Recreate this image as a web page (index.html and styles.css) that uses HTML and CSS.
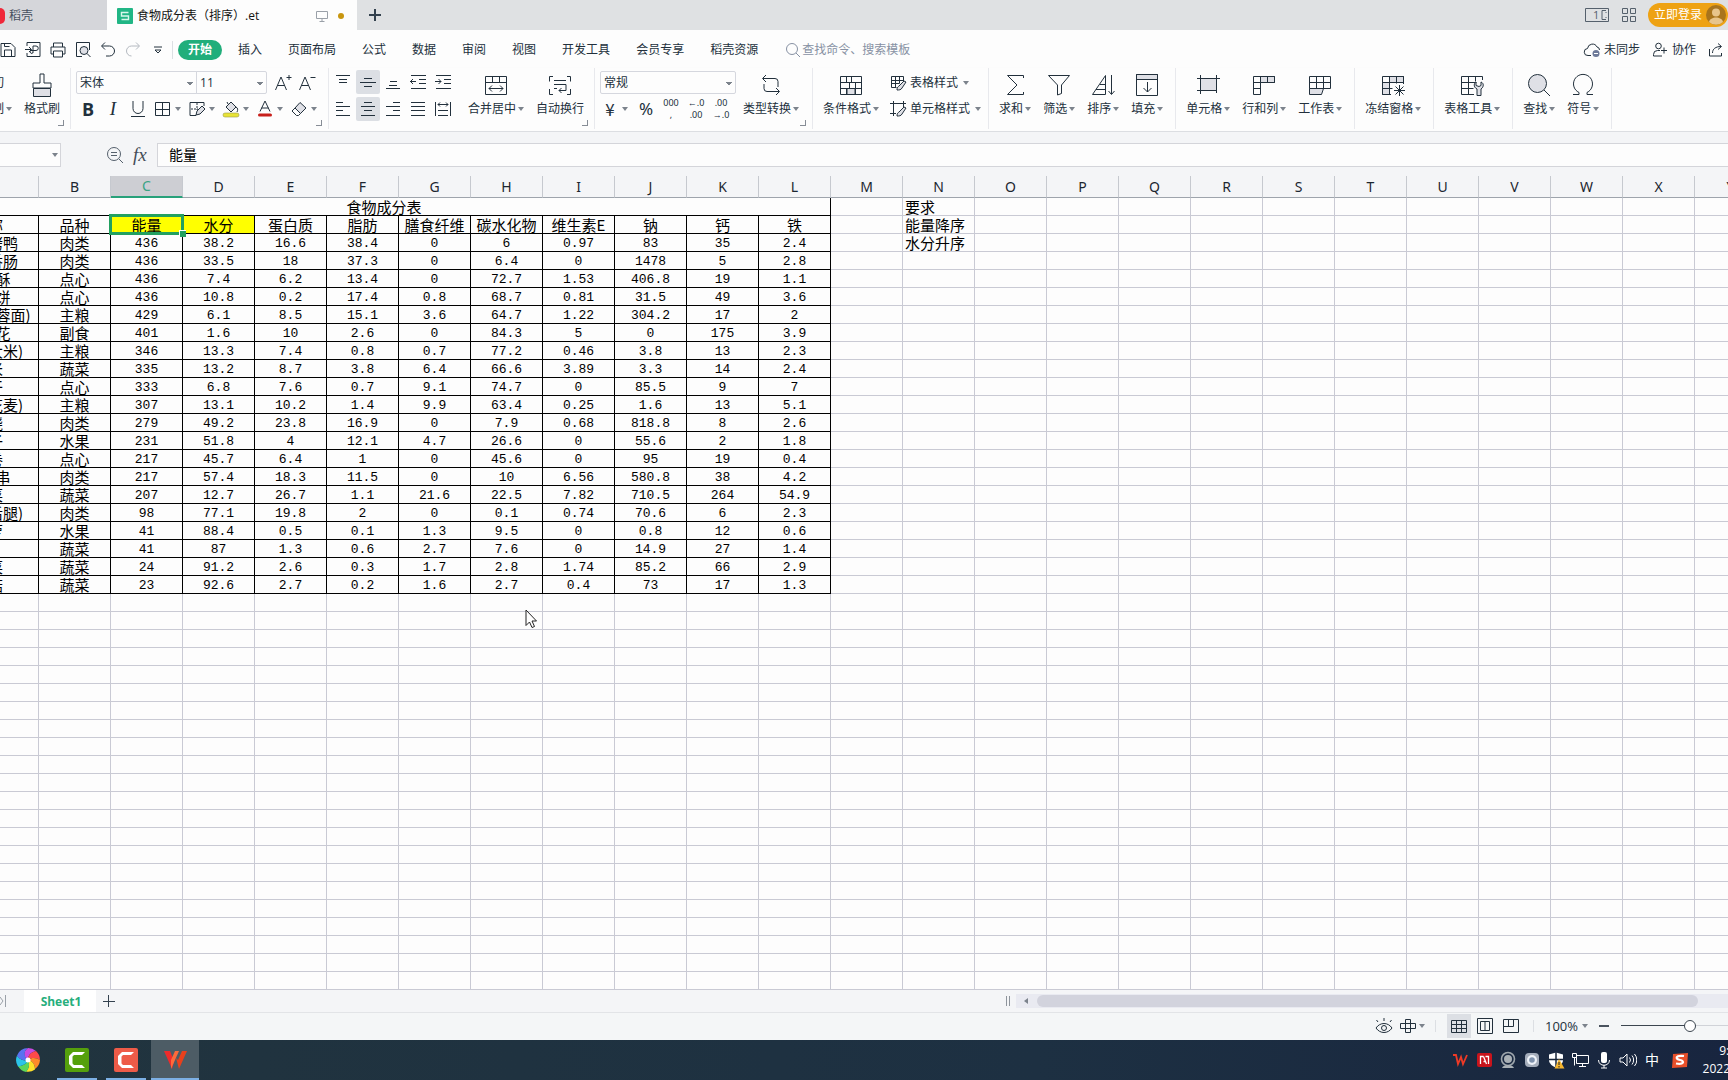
FILE: index.html
```html
<!DOCTYPE html>
<html lang="zh-CN">
<head>
<meta charset="utf-8">
<title>食物成分表（排序）.et</title>
<link rel="stylesheet" href="styles.css">
</head>
<body>
<svg class="defs" aria-hidden="true">
  <symbol id="save" viewBox="0 0 18 18"><path d="M2 2.500h10l4 4v9H2z M5.500 15v-6h7v6 M5.500 2.500v3h5"/></symbol>
  <symbol id="pdf" viewBox="0 0 18 18"><path d="M3 5V1.500h13v14H3V12 M1 8.500h6 M5 6l2.500 2.500L5 11 M9 12V5h3a2 2 0 0 1 0 4.500H7a1.500 1.500 0 1 0 2 2"/></symbol>
  <symbol id="print" viewBox="0 0 18 18"><path d="M4.500 6V2h9v4 M4.500 13H2V6h14v7h-2.500 M4.500 10h9v6h-9z"/></symbol>
  <symbol id="preview" viewBox="0 0 18 18"><path d="M8 15.500H2.500v-14h13V9"/><circle class="soft" cx="10" cy="9.500" r="4"/><path d="M13 12.500l3.500 3.500"/></symbol>
  <symbol id="undo" viewBox="0 0 18 18"><path d="M6 1.500L2.500 5 6 8.500 M3 5h7.500a5 5 0 0 1 0 10H7"/></symbol>
  <symbol id="redo" viewBox="0 0 18 18"><path d="M12 1.500L15.500 5 12 8.500 M15 5H7.500a5 5 0 0 0 0 10"/></symbol>
  <symbol id="more" viewBox="0 0 10 10"><path d="M1 2h8 M2 5l3 3 3-3z"/></symbol>
  <symbol id="lens" viewBox="0 0 18 18"><circle cx="8" cy="8" r="5.500"/><path d="M12 12l4 4"/></symbol>
  <symbol id="cloud" viewBox="0 0 18 18"><path d="M8 14.500H5a3.500 3.500 0 0 1-.5-7A5 5 0 0 1 14 6a3 3 0 0 1 2.500 3"/><circle cx="13" cy="12.500" r="3.500" fill="#6e7a99" stroke="none"/><path d="M11 12.500h4" stroke="#fff"/></symbol>
  <symbol id="person" viewBox="0 0 18 18"><circle cx="7.500" cy="5" r="2.800"/><path d="M11 15H2.500v-1.500a4 4 0 0 1 4-4h2.500 M13 6.500v6 M10 9.500h6"/></symbol>
  <symbol id="share" viewBox="0 0 18 18"><path d="M2.500 8v7h12v-3 M5.500 12c0-4 3-6.500 8.500-6.500 M11 2.500l3.500 3-3.500 3"/></symbol>
  <symbol id="brush" viewBox="0 0 24 24"><path d="M10 8V1h4v9h7v5H3v-5h7V8"/><path class="soft" d="M3.500 15.500h17v8h-17z"/></symbol>
  <symbol id="aplus" viewBox="0 0 18 18"><path d="M1.500 16L7 3l5.500 13 M3.500 11.500h7 M15 1v5 M12.500 3.500h5"/></symbol>
  <symbol id="aminus" viewBox="0 0 18 18"><path d="M1.500 16L7 3l5.500 13 M3.500 11.500h7 M12.500 3.500h5"/></symbol>
  <symbol id="ul" viewBox="0 0 18 18"><path d="M4 1v7.500a4.500 4.500 0 0 0 10 0V1 M2 16.500h14"/></symbol>
  <symbol id="borders" viewBox="0 0 18 18"><path d="M1.500 2.500h14v13h-14z M8.500 2.500v13 M1.500 9.500h14"/></symbol>
  <symbol id="drawborder" viewBox="0 0 18 18"><path d="M16 6V2.500H2v13h6"/><path stroke-dasharray="2 1" d="M9 3v7 M3 9h7"/><path class="soft" d="M8 15l1-4 5-5 3 3-5 5z"/></symbol>
  <symbol id="fill" viewBox="0 0 18 18"><path class="soft" d="M4 7l5-5 5 5-5 5z"/><path d="M6 4L5 2 M14 7c2 1 2 3 1 5"/><rect x="1" y="13" width="16" height="4" rx="2" fill="#e8e337" stroke="#9a9a4a" stroke-width=".6"/></symbol>
  <symbol id="fontcolor" viewBox="0 0 18 18"><path d="M4 11.500L9 1l5 10.500 M5.500 8h7"/><rect x="2" y="13.500" width="14" height="3" rx="1.500" fill="#c8201c" stroke="none"/></symbol>
  <symbol id="eraser" viewBox="0 0 18 18"><path class="soft" d="M5 8l5-5.500 6 5.500-5.500 5.500z"/><path d="M5 8l-3 3 4.500 4.500h2l2-2"/></symbol>
  <symbol id="vtop" viewBox="0 0 18 18"><path d="M2 2.500h14 M5 6.500h8 M5 9.500h8"/></symbol>
  <symbol id="vmid" viewBox="0 0 18 18"><path d="M5 5.500h8 M1 9.500h16 M5 13.500h8"/></symbol>
  <symbol id="vbot" viewBox="0 0 18 18"><path d="M6 8.500h7 M5 12.500h8 M2 15.500h14"/></symbol>
  <symbol id="outdent" viewBox="0 0 18 18"><path d="M2 2.500h15 M10 6.500h7 M10 10.500h7 M2 15.500h15 M1 8.500h6 M4 6L1.500 8.500 4 11"/></symbol>
  <symbol id="indent" viewBox="0 0 18 18"><path d="M2 2.500h15 M10 6.500h7 M10 10.500h7 M2 15.500h15 M1 8.500h6 M4.500 6L7 8.500 4.500 11"/></symbol>
  <symbol id="left" viewBox="0 0 18 18"><path d="M2 2.500h7 M2 6.500h14 M2 10.500h7 M2 15.500h14"/></symbol>
  <symbol id="center" viewBox="0 0 18 18"><path d="M5 2.500h8 M2 6.500h14 M5 10.500h8 M2 15.500h14"/></symbol>
  <symbol id="right" viewBox="0 0 18 18"><path d="M9 2.500h7 M2 6.500h14 M9 10.500h7 M2 15.500h14"/></symbol>
  <symbol id="justify" viewBox="0 0 18 18"><path d="M2 2.500h14 M2 6.500h14 M2 10.500h14 M2 15.500h14"/></symbol>
  <symbol id="spread" viewBox="0 0 18 18"><path d="M1.500 2v14 M16.500 2v14 M4 4.500h10 M6 2.500l-2 2 2 2 M12 2.500l2 2-2 2 M4 10.500h10 M4 15.500h10"/></symbol>
  <symbol id="merge" viewBox="0 0 24 24"><path d="M1.500 3.500h21v18h-21z M1.500 9.500h21 M8.500 3.500v6 M15.500 3.500v6 M5 15.500h14 M8 12.500l-3 3 3 3 M16 12.500l3 3-3 3"/></symbol>
  <symbol id="wrap" viewBox="0 0 24 24"><path d="M5 3.500H1.500v5 M19 3.500h3.500v5 M1.500 16v5.500H5 M22.500 16v5.500H19 M6 7.500h12 M6 11.500h12 M6 15.500h3 M18 11.500v6h-7 M13.500 15L11 17.500l2.500 2.500"/></symbol>
  <symbol id="convert" viewBox="0 0 24 24"><path d="M7 2L3.500 5.500 7 9 M4 5.500h12a3 3 0 0 1 3 3V14 M17 15l3.500 3.500L17 22 M20 18.500H8a3 3 0 0 1-3-3V11"/></symbol>
  <symbol id="cond" viewBox="0 0 24 24"><path class="soft" d="M8 15.500h8v6H8z"/><path d="M1.500 3.500h21v18h-21z M1.500 9.500h21 M1.500 15.500h21 M7.500 3.500v6 M7.500 15.500v6 M12.500 3.500v6 M10.500 9.500v6 M16.500 9.500v12"/></symbol>
  <symbol id="tstyle" viewBox="0 0 18 18"><path d="M14.500 7V2.500h-12v11h5 M2.500 6.500h12 M2.500 9.500h8 M6.500 2.500v11 M10.500 2.500v7"/><path class="soft" d="M8 16c0-3 1-3 2-4l5-5 2 1-4 6c-1 2-3 2-5 2z"/></symbol>
  <symbol id="cstyle" viewBox="0 0 18 18"><path d="M4.500 1v15 M1 3.500h16 M14.500 1v6 M1 13.500h6"/><path class="soft" d="M8 16c0-3 1-3 2-4l5-5 2 1-4 6c-1 2-3 2-5 2z"/></symbol>
  <symbol id="sum" viewBox="0 0 24 24"><path d="M20.500 5V2.500h-16L14 12l-9.500 9.500h16V19"/></symbol>
  <symbol id="filter" viewBox="0 0 24 24"><path d="M1.500 2.500h21L14.500 12v8.500l-4 1.500V12z"/></symbol>
  <symbol id="sort" viewBox="0 0 24 24"><path d="M1.500 21.500L14.500 2.500v19z M9 11.500h5.500 M5 16.500h9.500 M20.500 2v19 M17.500 18l3 3.500 3-3.500"/></symbol>
  <symbol id="fillin" viewBox="0 0 24 24"><path class="soft" d="M1.500 1.500h21v5h-21z"/><path d="M1.500 1.500h21v21h-21z M12.500 9v10 M8.500 15l4 4 4-4"/></symbol>
  <symbol id="cells" viewBox="0 0 24 24"><path class="soft" d="M4.500 5.500h16v12h-16z"/><path d="M4.500 2v19 M1 5.500h23 M20.500 2v13 M1 17.500h18 M20.500 17v3"/></symbol>
  <symbol id="rowcol" viewBox="0 0 24 24"><path class="soft" d="M8.500 3.500h14v6h-14z"/><path d="M1.500 3.500h21v6h-14v12h-7z M1.500 9.500h7 M1.500 15.500h7 M8.500 3.500v6 M15.500 3.500v6"/></symbol>
  <symbol id="sheet" viewBox="0 0 24 24"><path class="soft" d="M1.500 15.500h14l-2 6h-12z"/><path d="M1.500 3.500h21v12h-21z M1.500 9.500h21 M8.500 3.500v12 M15.500 3.500v12"/></symbol>
  <symbol id="freeze" viewBox="0 0 24 24"><path class="soft" d="M1.500 9.500h7v12h-7z M8.500 3.500h14v6h-14z"/><path d="M22.500 11V3.500h-21v18H10 M1.500 9.500h21 M1.500 15.500h10 M8.500 3.500v18 M15.500 3.500v7 M18.500 12v11 M13 17.500h11 M14.500 13.500l8 8 M22.500 13.500l-8 8"/></symbol>
  <symbol id="tools" viewBox="0 0 24 24"><path d="M22.500 7V3.500h-21v18H14 M1.500 9.500h15 M1.500 15.500h12 M8.500 3.500v18 M15.500 3.500v5"/><path class="soft" d="M17 22.500V16c-4-2-3-6-1-7v3.500l3 1 2-1V9c3 1 3 5 0 7v6.500z"/></symbol>
  <symbol id="find" viewBox="0 0 24 24"><circle class="soft" cx="10.500" cy="10.500" r="9"/><path d="M17 17l6 6"/></symbol>
  <symbol id="omega" viewBox="0 0 24 24"><path d="M2 21.500h6v-2A9.500 9.500 0 1 1 16 19.500v2h6"/></symbol>
  <symbol id="zoomout" viewBox="0 0 18 18"><circle cx="8" cy="8" r="6.500"/><path d="M5 6.500h6 M5 9.500h6 M13 13l4 4"/></symbol>
  <symbol id="comp" viewBox="0 0 26 18"><path d="M1.500 2.500h23v13h-23z M22 4.500h-4v9h4 M22 6v1 M22 11v1"/></symbol>
  <symbol id="grid4" viewBox="0 0 18 18"><path d="M2.500 2.500h5v5h-5z M10.500 2.500h5v5h-5z M2.500 10.500h5v5h-5z M10.500 10.500h5v5h-5z"/></symbol>
  <symbol id="monitor" viewBox="0 0 12 12"><path d="M.5 1.500h11v7H.5z M6 8.500v3 M3.500 11.500h5"/></symbol>
  <symbol id="eye" viewBox="0 0 18 18"><path d="M1 11c4-6 12-6 16 0-4 6-12 6-16 0z M3 5L1.500 3 M9 4V1 M15 5l1.500-2"/><circle cx="9" cy="11" r="2.500"/></symbol>
  <symbol id="cross" viewBox="0 0 18 18"><path d="M6.500 2.500h5v13h-5z M1.500 6.500h15v5h-15z"/></symbol>
  <symbol id="normal" viewBox="0 0 18 18"><path d="M1.500 3.500h15v12h-15z M1.500 7.500h15 M1.500 11.500h15 M6.500 3.500v12 M11.500 3.500v12"/></symbol>
  <symbol id="page" viewBox="0 0 18 18"><path d="M1.500 1.500h15v15h-15z M4.500 4.500h9v9h-9z M9 4.500v9"/></symbol>
  <symbol id="breaks" viewBox="0 0 18 18"><path d="M1.500 2.500h15v13h-15z M6.500 2.500v7 M1.500 9.500h10 M11.500 2.500v7"/></symbol>
  <symbol id="camtasia" viewBox="0 0 24 24"><path fill="#fff" stroke="none" d="M4 8l4-4h12l-3 3H9L7.500 8.500v7L9 17h8l3 3H8l-4-4z"/></symbol>
</svg>

<div class="app">
  <header class="titlebar">
    <button class="doc-tab home"><span class="shell"></span>稻壳</button>
    <button class="doc-tab current">
      <svg class="doc-logo" viewBox="0 0 16 16"><rect width="16" height="16" rx="1" fill="#21b685"/><path d="M11.500 4.500h-7v3.500h7v3.500h-7" fill="none" stroke="#d8f7ea" stroke-width="1.400"/></svg>
      <span>食物成分表（排序）.et</span>
      <svg class="ic mon"><use href="#monitor"/></svg><i class="unsaved"></i>
    </button>
    <button class="new-tab" aria-label="新建"></button>
    <div class="title-right">
      <button class="comp" aria-label="对照"><svg class="ic"><use href="#comp"/></svg><span>1</span></button>
      <button aria-label="应用"><svg class="ic"><use href="#grid4"/></svg></button>
      <button class="login">立即登录<svg viewBox="0 0 20 20"><circle cx="10" cy="10" r="10" fill="#a8741c"/><circle cx="10" cy="7.500" r="4" fill="#e8c58b"/><path d="M3 17c1-6 13-6 14 0a10 10 0 0 1-14 0z" fill="#e8c58b"/></svg></button>
    </div>
  </header>

  <nav class="menubar">
    <div class="quick">
      <button aria-label="保存"><svg class="ic"><use href="#save"/></svg></button>
      <button aria-label="输出为PDF"><svg class="ic"><use href="#pdf"/></svg></button>
      <button aria-label="打印"><svg class="ic"><use href="#print"/></svg></button>
      <button aria-label="打印预览"><svg class="ic"><use href="#preview"/></svg></button>
      <button aria-label="撤销"><svg class="ic"><use href="#undo"/></svg></button>
      <button class="off" aria-label="恢复"><svg class="ic"><use href="#redo"/></svg></button>
      <button aria-label="更多"><svg class="ic tiny"><use href="#more"/></svg></button>
    </div>
    <button class="pill">开始</button>
    <div class="menus">
      <button>插入</button><button>页面布局</button><button>公式</button><button>数据</button><button>审阅</button><button>视图</button><button>开发工具</button><button>会员专享</button><button>稻壳资源</button>
      <label class="search"><svg class="ic"><use href="#lens"/></svg><input type="text" placeholder="查找命令、搜索模板" aria-label="查找命令"></label>
    </div>
    <div class="menu-right">
      <button><svg class="ic"><use href="#cloud"/></svg>未同步</button>
      <button><svg class="ic"><use href="#person"/></svg>协作</button>
      <button><svg class="ic"><use href="#share"/></svg>分享</button>
    </div>
  </nav>

  <section class="ribbon">
    <div class="group clip launch">
      <div class="stack cut"><button>剪切</button><button class="dd">复制</button></div>
      <button class="big"><svg class="ic"><use href="#brush"/></svg><span>格式刷</span></button>
    </div>
    <div class="group font launch">
      <div class="lines">
        <div class="line">
          <select class="face" aria-label="字体"><option>宋体</option></select><select class="size" aria-label="字号"><option>11</option></select>
          <button class="tool grow" aria-label="增大字号"><svg class="ic"><use href="#aplus"/></svg></button>
          <button class="tool" aria-label="减小字号"><svg class="ic"><use href="#aminus"/></svg></button>
        </div>
        <div class="line pad">
          <button class="tool bold">B</button><button class="tool ital">I</button>
          <button class="tool" aria-label="下划线"><svg class="ic"><use href="#ul"/></svg></button>
          <button class="tool dd" aria-label="边框"><svg class="ic"><use href="#borders"/></svg></button>
          <button class="tool dd" aria-label="绘图边框"><svg class="ic"><use href="#drawborder"/></svg></button>
          <button class="tool dd" aria-label="填充颜色"><svg class="ic"><use href="#fill"/></svg></button>
          <button class="tool dd" aria-label="字体颜色"><svg class="ic"><use href="#fontcolor"/></svg></button>
          <button class="tool dd" aria-label="清除"><svg class="ic"><use href="#eraser"/></svg></button>
        </div>
      </div>
    </div>
    <div class="group align launch">
      <div class="aligns">
        <button class="tool" aria-label="顶端对齐"><svg class="ic"><use href="#vtop"/></svg></button>
        <button class="tool on" aria-label="垂直居中"><svg class="ic"><use href="#vmid"/></svg></button>
        <button class="tool" aria-label="底端对齐"><svg class="ic"><use href="#vbot"/></svg></button>
        <button class="tool" aria-label="减少缩进"><svg class="ic"><use href="#outdent"/></svg></button>
        <button class="tool" aria-label="增加缩进"><svg class="ic"><use href="#indent"/></svg></button>
        <button class="tool" aria-label="左对齐"><svg class="ic"><use href="#left"/></svg></button>
        <button class="tool on" aria-label="水平居中"><svg class="ic"><use href="#center"/></svg></button>
        <button class="tool" aria-label="右对齐"><svg class="ic"><use href="#right"/></svg></button>
        <button class="tool" aria-label="两端对齐"><svg class="ic"><use href="#justify"/></svg></button>
        <button class="tool" aria-label="分散对齐"><svg class="ic"><use href="#spread"/></svg></button>
      </div>
      <button class="big"><svg class="ic"><use href="#merge"/></svg><span class="dd">合并居中</span></button>
      <button class="big"><svg class="ic"><use href="#wrap"/></svg><span>自动换行</span></button>
    </div>
    <div class="group number launch">
      <div class="lines">
        <div class="line"><select class="format" aria-label="数字格式"><option>常规</option></select></div>
        <div class="line nums">
          <button class="tool dd yen">¥</button><button class="tool pct">%</button>
          <button class="tool mini"><span>000</span><span>,</span></button>
          <button class="tool mini"><span>←.0</span><span>.00</span></button>
          <button class="tool mini"><span>.00</span><span>→.0</span></button>
        </div>
      </div>
      <button class="big"><svg class="ic"><use href="#convert"/></svg><span class="dd">类型转换</span></button>
    </div>
    <div class="group styles">
      <button class="big"><svg class="ic"><use href="#cond"/></svg><span class="dd">条件格式</span></button>
      <div class="stack">
        <button class="dd"><svg class="ic"><use href="#tstyle"/></svg>表格样式</button>
        <button class="dd"><svg class="ic"><use href="#cstyle"/></svg>单元格样式</button>
      </div>
    </div>
    <div class="group">
      <button class="big"><svg class="ic"><use href="#sum"/></svg><span class="dd">求和</span></button>
      <button class="big"><svg class="ic"><use href="#filter"/></svg><span class="dd">筛选</span></button>
      <button class="big"><svg class="ic"><use href="#sort"/></svg><span class="dd">排序</span></button>
      <button class="big"><svg class="ic"><use href="#fillin"/></svg><span class="dd">填充</span></button>
    </div>
    <div class="group">
      <button class="big"><svg class="ic"><use href="#cells"/></svg><span class="dd">单元格</span></button>
      <button class="big"><svg class="ic"><use href="#rowcol"/></svg><span class="dd">行和列</span></button>
      <button class="big"><svg class="ic"><use href="#sheet"/></svg><span class="dd">工作表</span></button>
    </div>
    <div class="group"><button class="big"><svg class="ic"><use href="#freeze"/></svg><span class="dd">冻结窗格</span></button></div>
    <div class="group"><button class="big"><svg class="ic"><use href="#tools"/></svg><span class="dd">表格工具</span></button></div>
    <div class="group">
      <button class="big"><svg class="ic"><use href="#find"/></svg><span class="dd">查找</span></button>
      <button class="big"><svg class="ic"><use href="#omega"/></svg><span class="dd">符号</span></button>
    </div>
  </section>

  <section class="formula">
    <button class="namebox dd" aria-label="名称框"></button>
    <button class="zoomfx" aria-label="浏览公式"><svg class="ic"><use href="#zoomout"/></svg></button>
    <span class="fx">fx</span>
    <input class="fxinput" type="text" value="能量" aria-label="编辑栏">
  </section>

  <main class="sheet">
    <table class="grid"><colgroup id="cols"></colgroup><thead><tr id="heads"></tr></thead><tbody id="rows"></tbody></table>
    <svg class="cursor" viewBox="0 0 12 20"><path d="M1 1v15.500l3.500-3.500 2.500 5.500 2.500-1L7 12h4.500z" fill="#fff" stroke="#222"/></svg>
  </main>

  <footer class="tabs">
    <svg class="ic last" viewBox="0 0 8 12"><path d="M0 2l3 4-3 4 M5.500 0v12"/></svg>
    <button class="sheet-tab">Sheet1</button>
    <button class="add" aria-label="新建工作表"></button>
    <i class="split"></i>
    <div class="hscroll"><i class="thumb"></i></div>
  </footer>

  <div class="status">
    <button aria-label="护眼模式"><svg class="ic"><use href="#eye"/></svg></button>
    <button class="dd" aria-label="阅读模式"><svg class="ic"><use href="#cross"/></svg></button>
    <i class="bar"></i>
    <button class="view on" aria-label="普通视图"><svg class="ic"><use href="#normal"/></svg></button>
    <button class="view" aria-label="页面视图"><svg class="ic"><use href="#page"/></svg></button>
    <button class="view" aria-label="分页预览"><svg class="ic"><use href="#breaks"/></svg></button>
    <i class="bar"></i>
    <button class="dd pctzoom">100%</button>
    <button class="minus" aria-label="缩小"></button>
    <input class="zoom" type="range" min="0" max="100" value="46" aria-label="缩放">
  </div>

  <div class="taskbar">
    <button class="task wheel" aria-label="浏览器"><svg viewBox="0 0 24 24"><path d="M12 12C7 9 7 3 12 0a12 12 0 0 1 8 3c-5 1-8 4-8 9z" fill="#c84ae0"/><path d="M12 12c0-5 3-8 8-9a12 12 0 0 1 4 9c-3-2-8-3-12 0z" fill="#ff4a4a"/><path d="M12 12c4-3 9-2 12 0a12 12 0 0 1-5 9c0-4-2-8-7-9z" fill="#ff8a2a"/><path d="M12 12c5 1 7 5 7 9.500a12 12 0 0 1-9 2c3-3 4-7 2-11.500z" fill="#ffe02a"/><path d="M12 12c2 4 1 9-2 12a12 12 0 0 1-8-6c4 0 9-2 10-6z" fill="#5cd65a"/><path d="M12 12c-1 4-6 6-10 6.500a12 12 0 0 1-1-11c2 3 6 6 11 4.500z" fill="#2cc4e8"/><path d="M12 12C7 13 3 11 1 7.500A12 12 0 0 1 12 0c-5 3-4 9 0 12z" fill="#5a72f0"/><circle cx="12" cy="12" r="2.500" fill="#fff"/></svg></button>
    <button class="task green" aria-label="Camtasia"><svg><use href="#camtasia"/></svg></button>
    <button class="task red" aria-label="Recorder"><svg><use href="#camtasia"/></svg></button>
    <button class="task active" aria-label="WPS"><svg viewBox="0 0 24 24"><path d="M1 3h6l4 10-2 8z" fill="#ef2b2b"/><path d="M8 21L16 3h-4l-4 9z" fill="#ff6a3a"/><path d="M13 10l3 11 8-18h-5l-4 9z" fill="#e8401c"/></svg></button>
    <div class="tray">
      <svg viewBox="0 0 18 18"><path d="M2 4h3l2 9 3-7 2 7 4-9" fill="none" stroke="#ee3a26" stroke-width="1.800"/></svg>
      <svg viewBox="0 0 18 18"><rect x="2" y="2" width="15" height="14" rx="2" fill="#c8141c"/><path d="M5.500 13V5.500l3 0 M13.500 13V5.500h-3 M8.500 5.500l3 7.500 M8.500 10.500h2" fill="none" stroke="#fff" stroke-width="1.300"/></svg>
      <svg viewBox="0 0 18 18"><circle cx="9" cy="8" r="6.500" fill="none" stroke="#9ea6ac" stroke-width="1.600"/><circle cx="9" cy="8" r="4" fill="#a9b0b5"/><path d="M3 17c1-4 11-4 12 0z" fill="#a9b0b5"/></svg>
      <svg viewBox="0 0 18 18"><rect x="2" y="2" width="14" height="14" rx="4" fill="#a4adbb"/><circle cx="9" cy="9" r="5" fill="#eef2f8"/><circle cx="9" cy="9" r="2.800" fill="#7f92ad"/></svg>
      <svg viewBox="0 0 18 18"><path d="M9 1.500l7 2V9c0 4-4 6.500-7 7.500C6 15.500 2 13 2 9V3.500z" fill="#fff"/><path d="M9 1v15 M2 8.500h14" stroke="#18263a" stroke-width="1.500"/><path d="M12 8l5.500 9.500h-10z" fill="#f5b52e"/><path d="M12 11v3 M12 15v1.500" stroke="#222"/></svg>
      <svg viewBox="0 0 18 18" class="line-ic"><path d="M5.500 4.500h12v8h-12z M11.500 12.500v3 M8 15.500h7 M1.500 2.500h4v4h-4z M3.500 6.500v8"/></svg>
      <svg viewBox="0 0 18 18"><rect x="6" y="1" width="6" height="11" rx="2" fill="#fff"/><path d="M3.500 9c0 7 11 7 11 0 M9 14v3 M6 17h6" fill="none" stroke="#fff"/></svg>
      <svg viewBox="0 0 18 18" class="line-ic"><path d="M1 7h3l4-4v12l-4-4H1z M10.500 6.500a4 4 0 0 1 0 5 M13 4.500a7 7 0 0 1 0 9 M15.500 3a9 9 0 0 1 0 12"/></svg>
      <span class="ime">中</span>
      <svg viewBox="0 0 18 18"><path d="M2 3l15-1-1 14-15 1z" fill="#e9502a"/><path d="M13 5c-9-1-9 3-4 4s4 5-4 3.500" fill="none" stroke="#fff" stroke-width="2.200"/></svg>
      <div class="clock"><span>9:24</span><span>2022/4/12</span></div>
    </div>
  </div>
</div>
<script src="sheet.js"></script>
</body>
</html>
```
FILE: styles.css
```css
* { box-sizing: border-box; }
body {
  margin: 0;
  overflow: hidden;
  font: 12px/16px "Open Sans", "Noto Sans CJK SC", sans-serif;
  color: #22303c;
}
button, input, select { font: inherit; color: inherit; margin: 0; padding: 0; border: 0; background: none; }
button { display: inline-flex; align-items: center; white-space: nowrap; flex: none; }
select { appearance: none; }
i { display: block; flex: none; }
svg { flex: none; display: block; }
.defs { position: absolute; width: 0; height: 0; }
.ic { width: 18px; height: 18px; fill: none; stroke: currentColor; stroke-width: 1; }
.ic.tiny { width: 10px; height: 10px; }
.soft { fill: #dfe0e6; }
.app { height: 100vh; display: flex; flex-direction: column; overflow: hidden; background: #fdfdfd; }

/* drop-down arrow after a control */
.dd::after {
  content: "";
  flex: none;
  margin-left: 2px;
  border: 3px solid transparent;
  border-top: 4px solid #7c838c;
  border-bottom: 0;
}

/* title bar */
.titlebar { display: flex; height: 30px; flex: none; background: #dfe1e3; }
.doc-tab { padding-top: 1px; }
.doc-tab.home { width: 107px; background: #d5d6da; color: #465060; gap: 4px; }
.shell { width: 5px; height: 16px; border-radius: 0 8px 8px 0; background: #f0283a; }
.doc-tab.current { width: 250px; padding: 1px 13px 0 10px; background: #fdfdfd; color: #111; gap: 4px; }
.doc-logo { width: 16px; height: 16px; }
.mon { width: 12px; height: 12px; margin-left: auto; color: #9aa0a8; }
.unsaved { width: 6px; height: 6px; border-radius: 3px; background: #c8960f; margin-left: 6px; }
.new-tab { width: 36px; justify-content: center; }
.new-tab::after, .add::after {
  content: "";
  width: 12px;
  height: 12px;
  background: linear-gradient(#34424f, #34424f) center / 12px 2px no-repeat, linear-gradient(#34424f, #34424f) center / 2px 12px no-repeat;
}
.title-right { display: flex; margin-left: auto; align-items: center; gap: 10px; color: #55606c; }
.comp .ic { width: 26px; }
.comp { position: relative; }
.comp span { position: absolute; left: 9px; font-size: 11px; }
.login { height: 24px; padding: 0 2px 0 6px; gap: 4px; border-radius: 12px; background: #eea213; color: #fff; }
.login svg { width: 20px; height: 20px; }

/* menu bar */
.menubar { display: flex; height: 38px; flex: none; align-items: center; padding-top: 1px; }
.quick { display: flex; align-items: center; gap: 7px; margin-left: -1px; padding-right: 7px; border-right: 1px solid #dcdfe3; }
.quick .tiny { margin: 0 2px 0 4px; }
.off { color: #b4b9c0; }
.pill { height: 20px; margin-left: 5px; padding: 0 10px; border-radius: 10px; background: #21ae7b; color: #fff; font-weight: 700; }
.menus { display: flex; gap: 26px; margin-left: 16px; align-items: center; }
.search { display: flex; align-items: center; color: #8791a3; }
.search input { width: 140px; }
.search input::placeholder { color: #8791a3; opacity: 1; }
.menu-right { display: flex; gap: 11px; margin-left: auto; margin-right: -24px; }
.menu-right button { gap: 3px; }

/* ribbon */
.ribbon { display: flex; height: 64px; flex: none; border-bottom: 1px solid #dcdee2; box-shadow: 0 1px 2px #e6e7ea; padding-bottom: 2px; }
.group { display: flex; position: relative; gap: 12px; flex: none; padding: 0 12px 0 10px; border-right: 1px solid #e8e9ed; }
.group.launch::after {
  content: "";
  position: absolute;
  right: 6px;
  bottom: 3px;
  width: 5px;
  height: 5px;
  border: solid #878d96;
  border-width: 0 1px 1px 0;
}
.big { flex-direction: column; gap: 4px; padding-top: 5px; align-self: flex-start; }
.big .ic { width: 24px; height: 24px; }
.big span { display: flex; align-items: center; }
.stack { display: flex; flex-direction: column; gap: 2px; padding-top: 3px; }
.stack button { height: 24px; gap: 3px; }
.clip { padding: 0 10px 0 0; gap: 12px; }
.cut { margin-left: -20px; }
.cut .dd { gap: 0; }
.lines { display: flex; flex-direction: column; gap: 3px; padding-top: 3px; }
.line { display: flex; height: 23px; align-items: center; }
.font { padding: 0 8px 0 5px; }
.face { width: 121px; border-radius: 2px 0 0 2px; }
.size { width: 71px; margin-left: -1px; border-radius: 0 2px 2px 0; }
.format { width: 136px; border-radius: 2px; }
.ribbon select {
  height: 23px;
  padding: 0 3px;
  border: 1px solid #d5d7de;
  background: conic-gradient(from -45deg at 50% 100%, #7c838c 90deg, transparent 0) right 3px center / 7px 4px no-repeat;
  background: conic-gradient(from -45deg at 50% 100%, transparent 90deg, transparent 0), linear-gradient(#7c838c, #7c838c) right 3px center / 6px 1px no-repeat, linear-gradient(#7c838c, #7c838c) right 4px top 11px / 4px 1px no-repeat, linear-gradient(#7c838c, #7c838c) right 5px top 12px / 2px 1px no-repeat;
}
.tool { justify-content: center; height: 23px; min-width: 24px; }
.tool.grow { margin-left: 4px; }
.line.pad { gap: 1px; }
.tool.dd { min-width: 33px; }
.tool.dd::after { margin-left: 3px; }
.bold { font: 700 18px/20px "Open Sans", sans-serif; }
.ital { font: italic 19px/20px "Liberation Serif", serif; }
.align { padding: 0 10px 0 2px; gap: 12px; }
.aligns { display: grid; grid-template-columns: repeat(5, 24px); gap: 3px 1px; margin-right: 1px; padding-top: 2px; align-self: flex-start; }
.tool.on, .view.on { background: #dcdfe4; }
.aligns .tool { height: 24px; border-radius: 2px; }
.number { padding: 0 13px 0 5px; gap: 7px; }
.nums { gap: 1px; }
.yen { font: 400 17px/20px "Noto Sans CJK SC", sans-serif; }
.tool.yen::after { margin-left: 7px; }
.pct { font: 17px/20px "Noto Sans", sans-serif; }
.mini { flex-direction: column; font: 9px/12px "Noto Sans", sans-serif; }
.styles { padding-right: 7px; gap: 10px; }

/* formula bar */
.formula { display: flex; height: 44px; flex: none; align-items: center; padding: 2px 0 0; background: #f4f5f7; }
.namebox { width: 61px; height: 24px; justify-content: flex-end; padding-right: 2px; border: 1px solid #d4d5da; border-left: 0; background: #fdfdfd; }
.zoomfx { margin-left: 45px; color: #55606c; }
.fx { width: 24px; margin-left: 9px; font: italic 19px/20px "Liberation Serif", serif; color: #444d58; }
.fxinput { flex: 1; min-width: 0; height: 24px; margin-right: -1px; padding: 0 11px 2px; border: 1px solid #d4d5da; background: #fdfdfd; color: #000; font-size: 14px; font-family: "Noto Sans CJK SC", sans-serif; }

/* cells */
.sheet { position: relative; flex: 1; min-height: 0; overflow: hidden; }
.grid { width: 1829px; margin-left: -62px; table-layout: fixed; border-collapse: separate; border-spacing: 0; color: #000; }
.grid .first { width: 101px; }
.grid th {
  height: 22px;
  padding: 0;
  border-right: 1px solid #c6c9cf;
  border-bottom: 1px solid #9ea4ac;
  background: #f4f5f7;
  font: 400 14px/20px "Noto Sans", sans-serif;
  color: #1c2630;
}
.grid th.picked { background: #cdced3; border-bottom: 2px solid #27a17a; color: #3aa384; }
.grid td {
  height: 18px;
  padding: 0;
  border-right: 1px solid #c9cad4;
  border-bottom: 1px solid #c9cad4;
  font: 400 15px/17px "Noto Sans CJK SC", sans-serif;
  text-align: center;
  white-space: nowrap;
}
.grid td.data { border-color: #000; }
.grid td.num { padding-top: 3px; font: 13px/14px "Liberation Mono", monospace; }
.grid td.note { text-align: left; padding-left: 2px; }
.grid td.hot { background: #ff0; }
.grid td.selected { position: relative; z-index: 1; }
.selected::before { content: ""; position: absolute; inset: -2px; border: 3px solid #22a060; }
.selected::after { content: ""; position: absolute; right: -4px; bottom: -4px; width: 6px; height: 6px; background: #22a060; border: solid #fff; border-width: 1px 0 0 1px; }
.cursor { position: absolute; left: 525px; top: 433px; width: 12px; height: 20px; }

/* sheet tabs */
.tabs { display: flex; height: 23px; flex: none; background: #f4f5f7; border-bottom: 1px solid #e2e4e7; }
.last { width: 8px; height: 12px; margin: 5px 16px 0 0; color: #9aa0a8; }
.sheet-tab { width: 72px; height: 22px; padding: 1px 0 0 2px; justify-content: center; background: #fff; color: #27ae7c; font-weight: 700; }
.add { width: 25px; height: 22px; justify-content: center; }
.add::after { background-size: 12px 1px, 1px 12px; }
.split { width: 4px; height: 10px; margin: 6px 6px 0 auto; border: solid #8e949c; border-width: 0 1px; }
.hscroll { display: flex; align-items: center; width: 41.2%; height: 14px; margin-top: 4px; padding-left: 8px; gap: 9px; background: #e9eaf1; }
.hscroll::before { content: ""; border: 3px solid transparent; border-right: 4px solid #7c838c; border-left: 0; }
.thumb { width: 661px; height: 12px; border-radius: 6px; background: #d2d3dd; }

/* status bar */
.status { display: flex; height: 27px; flex: none; align-items: center; justify-content: flex-end; padding-bottom: 2px; background: #f4f6f7; }
.status .dd { margin-left: 6px; }
.bar { width: 1px; height: 12px; margin: 0 11px 0 10px; background: #dcdfe3; }
.view { width: 24px; height: 24px; justify-content: center; }
.view + .view { margin-left: 2px; }
.status .pctzoom { margin-left: 0; font-size: 13px; }
.pctzoom::after { margin-left: 4px; }
.minus { width: 10px; height: 2px; margin: 0 12px 0 11px; background: #4a535e; }
.zoom { appearance: none; width: 150px; height: 14px; margin-right: -43px; background: linear-gradient(90deg, #3c4650 46%, #d0d3d8 46%) center / 100% 1px no-repeat; }
.zoom::-webkit-slider-thumb { appearance: none; width: 12px; height: 12px; border: 1px solid #3c4650; border-radius: 50%; background: #fff; }

/* taskbar */
.taskbar { display: flex; height: 40px; flex: none; align-items: center; background: linear-gradient(90deg, #21343e, #1d3042 60%, #18253f); }
.task { height: 40px; justify-content: center; }
.task svg { width: 24px; height: 24px; border-radius: 2px; }
.wheel { width: 40px; margin: 0 9px 0 8px; }
.green, .red { width: 40px; margin-right: 9px; border-bottom: 2px solid #7db0e4; padding-top: 2px; }
.red { margin-right: 5px; }
.green svg { background: #55a00c; }
.red svg { background: #ee5b48; }
.active { width: 48px; background: #4d5c65; border-bottom: 2px solid #7db0e4; padding-top: 2px; }
.tray { display: flex; align-items: center; gap: 6px; margin-left: auto; margin-right: -31px; color: #fff; }
.tray svg { width: 18px; height: 18px; }
.line-ic { fill: none; stroke: #fff; }
.ime { width: 18px; font-size: 14px; text-align: center; margin-right: 4px; }
.clock { display: flex; flex-direction: column; align-items: center; width: 56px; gap: 2px; margin-left: 8px; }
```
FILE: sheet.js
```js
const header = ['名称', '品种', '能量', '水分', '蛋白质', '脂肪', '膳食纤维', '碳水化物', '维生素E', '钠', '钙', '铁'];
const foods = `北京烤鸭 肉类 436 38.2 16.6 38.4 0 6 0.97 83 35 2.4
广东香肠 肉类 436 33.5 18 37.3 0 6.4 0 1478 5 2.8
凤梨酥 点心 436 7.4 6.2 13.4 0 72.7 1.53 406.8 19 1.1
绿豆饼 点心 436 10.8 0.2 17.4 0.8 68.7 0.81 31.5 49 3.6
方便面(蓉面) 主粮 429 6.1 8.5 15.1 3.6 64.7 1.22 304.2 17 2
爆米花 副食 401 1.6 10 2.6 0 84.3 5 0 175 3.9
稻米(大米) 主粮 346 13.3 7.4 0.8 0.7 77.2 0.46 3.8 13 2.3
玉米 蔬菜 335 13.2 8.7 3.8 6.4 66.6 3.89 3.3 14 2.4
饼干 点心 333 6.8 7.6 0.7 9.1 74.7 0 85.5 9 7
荞麦(花麦) 主粮 307 13.1 10.2 1.4 9.9 63.4 0.25 1.6 13 5.1
叉烧 肉类 279 49.2 23.8 16.9 0 7.9 0.68 818.8 8 2.6
椰子 水果 231 51.8 4 12.1 4.7 26.6 0 55.6 2 1.8
花卷 点心 217 45.7 6.4 1 0 45.6 0 95 19 0.4
羊肉串 肉类 217 57.4 18.3 11.5 0 10 6.56 580.8 38 4.2
紫菜 蔬菜 207 12.7 26.7 1.1 21.6 22.5 7.82 710.5 264 54.9
兔肉(后腿) 肉类 98 77.1 19.8 2 0 0.1 0.74 70.6 6 2.3
菠萝 水果 41 88.4 0.5 0.1 1.3 9.5 0 0.8 12 0.6
葱 蔬菜 41 87 1.3 0.6 2.7 7.6 0 14.9 27 1.4
菠菜 蔬菜 24 91.2 2.6 0.3 1.7 2.8 1.74 85.2 66 2.9
蘑菇 蔬菜 23 92.6 2.7 0.2 1.6 2.7 0.4 73 17 1.3`.split('\n').map(line => line.split(' '));
const notes = ['要求', '能量降序', '水分升序'];
const letters = [...'ABCDEFGHIJKLMNOPQRSTUVWXY'];
const ROWS = 44;
const NOTE_COLUMN = 13;

document.getElementById('cols').innerHTML = letters.map((_, c) => `<col${c ? '' : ' class="first"'}>`).join('');
document.getElementById('heads').innerHTML = letters
  .map((l, c) => `<th scope="col"${c === 2 ? ' class="picked"' : ''}>${l}</th>`).join('');

const data = [header, ...foods];
let html = '';
for (let r = 0; r < ROWS; r++) {
  html += '<tr>';
  let c = 0;
  if (r === 0) {
    html += '<td class="data" colspan="12">食物成分表</td>';
    c = 12;
  }
  for (; c < letters.length; c++) {
    const classes = [];
    let text = '';
    if (r > 0 && r <= data.length && c < 12) {
      classes.push('data');
      text = data[r - 1][c];
      if (r > 1 && c > 1) classes.push('num');
      if (r === 1 && (c === 2 || c === 3)) classes.push('hot');
      if (r === 1 && c === 2) classes.push('selected');
    } else if (c === NOTE_COLUMN && notes[r]) {
      classes.push('note');
      text = notes[r];
    }
    html += `<td class="${classes.join(' ')}">${text}</td>`;
  }
  html += '</tr>';
}
document.getElementById('rows').innerHTML = html;
```
